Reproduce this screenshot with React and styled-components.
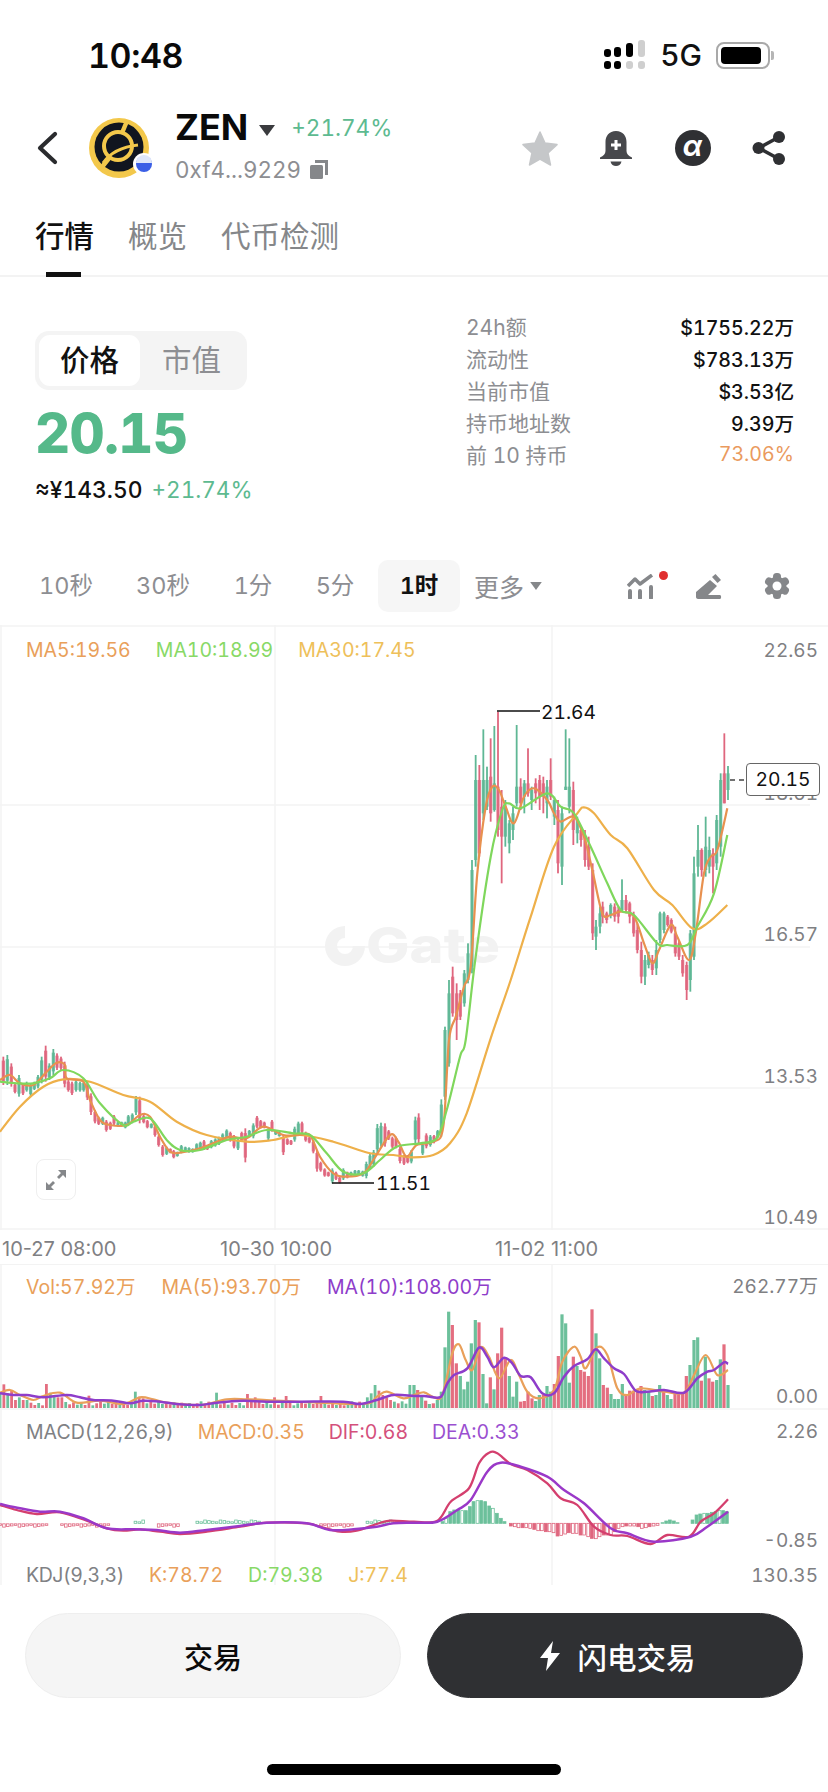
import React from "react";
import styled, { createGlobalStyle } from "styled-components";

const FONT = `"Inter", "Noto Sans CJK SC", "Noto Sans", sans-serif`;
const GREEN = "#5dba90";
const CANDLE_G = "#5fb795";
const CANDLE_R = "#df667e";

const Global = createGlobalStyle`
  html, body { margin: 0; padding: 0; background: #fff; }
  body { font-family: ${FONT}; color: #111; font-variant-numeric: tabular-nums; }
  * { box-sizing: border-box; }
`;

/* ---------- chart data, traced from the picture ---------- */
const L = (s) => s.trim().split(/\s+/).map((p) => p.split(",").map(Number));
const z3 = (s) => L(s).map(([x, y]) => [414 + x / 3, 640 + y / 3]);
const z4 = (s) => L(s).map(([x, y]) => [x / 3, 1000 + y / 3]);
const z5 = (s) => L(s).map(([x, y]) => [414 + x / 3, 1260 + y / 3]);
const z6 = (s) => L(s).map(([x, y]) => [x / 3, 1260 + y / 3]);

const smooth = (pts) => {
  let d = `M${pts[0][0].toFixed(1)} ${pts[0][1].toFixed(1)}`;
  for (let i = 0; i < pts.length - 1; i++) {
    const p0 = pts[i - 1] || pts[i];
    const p1 = pts[i];
    const p2 = pts[i + 1];
    const p3 = pts[i + 2] || p2;
    const c1x = p1[0] + (p2[0] - p0[0]) / 6;
    const c1y = p1[1] + (p2[1] - p0[1]) / 6;
    const c2x = p2[0] - (p3[0] - p1[0]) / 6;
    const c2y = p2[1] - (p3[1] - p1[1]) / 6;
    d += `C${c1x.toFixed(1)} ${c1y.toFixed(1)} ${c2x.toFixed(1)} ${c2y.toFixed(1)} ${p2[0].toFixed(1)} ${p2[1].toFixed(1)}`;
  }
  return d;
};

const MA5 = [
  ...z4("0,240 30,225 60,250 100,255 140,215 170,188 195,195 200,235 250,245 270,300 300,360 330,375 380,375 420,345 450,350 480,410 510,455 540,458 600,445 650,425 690,410 740,415 790,380 850,405 900,405 930,405 960,470 1000,520 1040,530 1090,520 1120,480 1170,405 1195,425 1220,470 1250,435 1300,425 1330,380"),
  ...z3("105,1200 125,1130 150,1040 170,980 190,700 215,500 235,440 255,450 275,500 300,550 330,470 360,445 400,480 420,520 440,545 480,530 510,590 535,690 565,820 590,825 620,815 660,830 690,910 715,970 735,930 770,855 790,890 825,960 845,880 870,700 890,650 910,630 940,505"),
];
const MA10 = [
  ...z4("0,245 50,250 100,250 150,235 190,210 250,235 300,310 370,375 400,365 450,355 500,420 540,450 600,450 680,420 740,410 800,390 880,400 930,405 980,460 1030,515 1090,520 1140,480 1190,440 1260,430 1310,415 1340,330 1380,170"),
  ...z3("155,1200 185,950 230,650 265,510 285,490 320,505 400,460 440,500 480,520 530,620 580,730 620,810 660,825 730,910 760,915 820,915 850,860 900,760 940,585"),
];
const MA30 = [
  ...z4("0,395 60,320 130,260 190,238 270,245 370,285 450,305 530,365 620,405 740,425 820,420 900,405 1000,425 1110,460 1180,465 1240,472 1300,465 1350,430 1400,340"),
  ...z3("230,1195 290,1020 350,830 420,620 490,520 510,502 540,520 590,585 640,625 720,750 775,795 835,865 880,850 940,795"),
];

const leftCandles = `10R170-255 22G165-255 34R190-260 45R250-280 57G225-290 69R250-285 80G245-275 92G250-288 103G245-270 114G225-265 125G170-250 137R137-245 148G190-240 160G147-225 171R160-210 183R170-210 194R185-262 205R240-275 216R245-285 228G240-275 240G245-275 251G245-275 262R245-300 273R280-345 285R330-370 296R350-375 308G350-375 319R360-395 331R365-390 342R345-375 354G365-380 365G365-380 376G365-385 385G345-375 397G340-370 408G288-345 419R290-370 431R345-370 442R360-385 454G370-385 465R375-410 476R405-440 488R435-470 500G440-465 511R445-460 521R450-475 532G455-470 544G435-460 556G440-455 567G442-458 578G445-458 590G430-450 601G425-450 612R420-450 622R435-450 634G420-445 646G415-440 657G410-435 668G400-425 680G388-415 691R395-425 702R405-445 714G415-450 725R395-425 736R385-487 748G390-410 760G370-415 771R348-385 782R360-385 793R365-385 805G385-420 816R360-395 827G390-405 838G395-410 850R405-465 862R415-435 873R420-435 884G380-425 895G365-405 906R365-400 917R395-425 928R410-430 940R420-460 951R450-515 962R485-515 974R505-530 985R515-530 997G505-550 1008R515-540 1019R530-550 1030G505-540 1042R515-535 1053G515-530 1065G510-525 1076G510-525 1088G512-530 1099G485-535 1110G460-510 1121G450-500 1132G372-460 1143G368-440 1155R370-440 1166R390-420 1177R410-445 1188R410-445 1200R440-490 1212R465-495 1223R465-490 1234G450-490 1246G350-430 1256R340-430 1268G430-465 1279R400-445 1291G405-440 1302R405-430 1313G390-415 1324G298-410`;

const rightCandles = `93G1160-1380:1170-1370 105G1020-1280:1060-1270 116R980-1130:1010-1120 128R1030-1200:1060-1140 139R1050-1140:1060-1130 151G990-1100:1000-1090 162G910-1030:940-1020 174G660-1000:690-980 185G345-680:420-660 196R375-650:420-640 208G268-540:420-520 219G380-510:420-500 230R295-545:410-520 241G258-515:430-510 252R215-590:440-570 263R450-730:500-590 274G480-620:500-590 286G540-640:550-610 297G500-600:520-570 308G255-500:440-490 320R415-510:440-490 331G420-520:430-470 342R325-470:430-460 353G440-510:450-480 365R415-490:430-460 377R405-510:420-470 388R410-520:430-470 399G420-535:440-490 410R355-480:420-470 421G470-555:480-530 432R480-700:510-670 444G500-735:520-680 455G268-450:440-450 466G295-520:440-500 478R425-615:450-570 490G530-610:540-580 501R560-620:570-600 513R570-680:590-660 524R590-690:620-680 536R670-900:690-880 546G840-930:860-890 558G800-880:820-860 566R785-850:800-830 578R815-850:820-840 590G790-835:795-825 602R790-845:800-830 613R800-850:810-830 624G718-815:780-810 636R765-820:780-810 647R785-850:790-830 659R815-890:830-880 670R850-940:870-930 682R905-1030:930-1010 693G945-1035:960-1010 704G935-985:945-975 715R945-1005:960-990 727G900-1005:930-985 738G815-910:820-900 750G815-880:820-870 761R825-860:830-855 772R835-880:840-875 784R860-950:880-940 795R900-960:910-950 806R945-1010:960-1000 818R965-1080:975-1050 829G870-1055:880-1020 840G650-960:700-950 852G555-710:630-680 863R625-710:630-690 875G530-710:620-690 886G590-700:630-680 897R625-760:640-680 908G525-690:540-670 920G400-650:420-620 931R280-490:400-490 942G378-480:400-450`;

const parseCandles = (s, conv) =>
  s.trim().split(/\s+/).map((t) => {
    const m = t.match(/^(\d+)([RG])(\d+)-(\d+)(?::(\d+)-(\d+))?$/);
    const x = +m[1], a = +m[3], b = +m[4];
    const inset = (b - a) * 0.14;
    const bt = m[5] ? +m[5] : a + inset;
    const bb = m[6] ? +m[6] : b - inset;
    return { x: conv(x), c: m[2], t: 0, a, b, bt, bb };
  });

const candles = [
  ...parseCandles(leftCandles, (x) => x / 3).map((c) => ({ ...c, y: (v) => 1000 + v / 3 })),
  ...parseCandles(rightCandles, (x) => 414 + x / 3).map((c) => ({ ...c, y: (v) => 640 + v / 3 })),
];

const volRight = L(`0,375,1 11,390,0 23,405,1 35,422,0 46,432,1 58,430,0 70,420,1 82,395,1 93,262,1 104,155,1 115,195,0 127,310,0 139,348,1 150,388,1 161,365,1 172,250,1 184,180,1 195,187,0 207,342,1 218,430,1 229,352,0 240,388,1 251,280,0 263,203,0 274,295,0 286,348,1 297,410,1 308,365,1 320,425,0 331,423,0 342,395,0 354,415,0 365,423,1 376,405,1 388,403,0 399,378,1 410,395,1 421,372,0 433,288,0 444,163,1 455,190,1 466,368,1 478,290,0 489,318,1 500,330,0 511,335,0 523,348,0 534,148,0 546,220,1 557,295,1 568,375,0 580,383,0 591,402,1 602,417,1 613,417,1 625,372,1 636,405,0 647,392,0 658,392,0 670,390,0 681,378,0 692,390,1 704,395,1 715,408,0 726,405,1 737,375,1 749,390,0 760,405,1 771,417,1 783,398,0 794,400,0 806,400,0 817,348,0 828,315,1 840,240,1 851,232,1 862,362,0 874,290,1 885,355,0 896,365,0 908,360,1 919,298,1 930,253,0 942,375,1`);

const volLeftPeaks = { 0: [400, 1], 1: [373, 0], 2: [400, 1], 3: [390, 0], 4: [420, 0], 5: [412, 1], 6: [420, 0], 7: [420, 1], 12: [372, 0], 13: [398, 1], 14: [410, 1], 15: [412, 0], 16: [412, 0], 23: [407, 0], 35: [395, 1], 36: [410, 0], 37: [415, 0], 56: [398, 1], 64: [402, 0], 66: [412, 0], 71: [412, 0], 74: [408, 0], 83: [408, 0], 95: [412, 1], 96: [400, 1], 97: [375, 1], 98: [392, 0], 99: [405, 0], 100: [412, 0], 101: [420, 0], 102: [425, 1], 106: [375, 1] };
const volLeft = Array.from({ length: 107 }, (_, i) => {
  const o = volLeftPeaks[i];
  if (o) return [i * 11.6, o[0], o[1]];
  return [i * 11.6, 424 + ((i * 7) % 13), (i * 5) % 7 < 3 ? 1 : 0];
});

const volMa5 = [...z6("0,398 30,390 60,405 100,420 130,408 180,398 230,428 300,422 370,432 420,412 460,418 500,428 600,435 680,418 740,418 800,420 1080,432 1130,410 1160,395 1210,415"), ...z5("0,405 30,397 60,412 85,405 115,280 135,253 155,300 175,330 200,262 225,290 255,355 290,300 315,345 340,395 375,415 420,390 445,305 480,260 500,290 515,325 550,262 580,285 610,385 640,405 680,385 750,395 810,398 840,345 875,285 910,345 942,330")];
const volMa10 = [...z6("0,400 40,405 80,405 130,412 200,405 240,412 280,420 340,422 390,430 430,422 480,425 530,432 600,435 650,428 730,422 800,425 900,425 1030,425 1080,432 1130,420 1180,405"), ...z5("0,408 30,408 70,413 85,405 100,370 120,345 160,325 195,263 220,290 240,322 270,293 295,310 320,348 350,352 385,400 420,400 450,350 480,318 520,298 545,268 570,295 600,325 630,342 665,392 700,395 750,390 810,398 850,355 880,335 900,330 930,307 942,312")];

const dif = [...z6("0,735 50,750 110,762 180,757 260,782 320,805 370,812 420,808 480,815 540,822 620,815 720,800 800,788 920,790 960,800 1020,815 1070,812 1130,792 1170,782"), ...z5("0,785 70,782 110,725 165,685 195,610 225,578 250,580 290,612 340,630 400,670 440,715 490,735 540,800 590,825 640,828 710,852 760,825 825,830 860,785 900,760 942,718")];
const dea = [...z6("0,732 60,745 120,755 180,755 250,775 320,805 400,808 470,810 540,818 620,810 720,798 800,788 920,790 990,810 1060,808 1130,800 1180,790"), ...z5("0,788 70,785 130,750 170,720 220,635 260,608 320,620 400,650 450,690 510,730 590,805 640,820 720,845 830,830 880,800 942,755")];

const histG = L("85,785 96,775 108,755 120,750 132,750 144,752 155,752 167,740 178,725 190,722 201,722 213,725 225,738 236,745 248,760 260,775 271,785 745,788 756,783 767,780 779,783 790,788 835,780 847,765 858,762 870,760 881,760 893,757 904,755 916,752 927,752 938,755");
const histR = L("290,798 302,800 313,803 325,803 336,803 348,805 360,808 372,812 383,812 395,815 406,815 418,818 430,828 441,826 453,822 464,818 476,820 487,820 499,825 510,825 522,830 533,835 545,836 556,830 568,825 579,825 590,825 602,815 613,805 625,800 636,798 648,798 660,798 672,800 683,805 695,803 706,800 718,798 730,796");
const MACD_BASE = 1260 + 790 / 3;
const histLeft = Array.from({ length: 107 }, (_, i) => {
  const x = i * 11.6;
  const red = (x < 150) || (x > 180 && x < 330) || (x > 470 && x < 540) || (x > 960 && x < 1060);
  const green = (x > 590 && x < 780) || (x > 1100 && x < 1190) || (x > 405 && x < 430);
  if (!red && !green) return null;
  return { x: x / 3, red, h: 1.5 + ((i * 3) % 4) * 0.6 };
}).filter(Boolean);

/* ---------- page ---------- */
const Page = styled.div`
  width: 828px;
  height: 1792px;
  overflow: hidden;
  background: #fff;
  font-family: ${FONT};
`;
const StatusBar = styled.div`
  height: 110px;
  display: flex;
  align-items: center;
  justify-content: space-between;
  padding: 0 58px 0 88px;
`;
const Clock = styled.div`
  font-size: 34px;
  font-weight: 600;
  letter-spacing: -0.4px;
  color: #0a0a0a;
`;
const StatusRight = styled.div`
  display: flex;
  align-items: center;
  gap: 14px;
`;
const Network = styled.div`
  font-size: 30px;
  font-weight: 500;
  color: #111;
`;
const Battery = styled.div`
  position: relative;
  width: 54px;
  height: 27px;
  border: 2px solid #a9a9a9;
  border-radius: 8px;
  padding: 3px;
  &::after {
    content: "";
    position: absolute;
    right: -6px;
    top: 7px;
    width: 3px;
    height: 9px;
    background: #b5b5b5;
    border-radius: 0 2px 2px 0;
  }
`;
const BatteryFill = styled.div`
  width: 40px;
  height: 100%;
  background: #000;
  border-radius: 4px;
`;
const Header = styled.div`
  height: 75px;
  display: flex;
  align-items: center;
  padding: 0 41px 0 36px;
`;
const Logo = styled.div`
  position: relative;
  width: 60px;
  height: 60px;
  margin-left: 31px;
  flex: none;
`;
const Badge = styled.svg`
  position: absolute;
  right: -6px;
  bottom: 3px;
`;
const TitleCol = styled.div`
  margin-left: 26px;
  display: flex;
  flex-direction: column;
  gap: 9px;
  margin-top: -6px;
`;
const TitleRow = styled.div`
  display: flex;
  align-items: center;
  height: 40px;
`;
const Symbol = styled.div`
  font-size: 36px;
  font-weight: 700;
  color: #0a0a0a;
`;
const Change = styled.div`
  font-size: 22.500px;
  color: ${GREEN};
  margin-left: ${(p) => p.$gap || 0}px;
`;
const AddressRow = styled.div`
  display: flex;
  align-items: center;
  gap: 9px;
  font-size: 22.400px;
  color: #8d8e92;
  height: 26px;
`;
const HeaderIcons = styled.div`
  margin-left: auto;
  display: flex;
  align-items: center;
  gap: 40.5px;
`;
const IconSlot = styled.div`
  width: 36px;
  height: 36px;
  display: flex;
  align-items: center;
  justify-content: center;
`;
const AlphaBadge = styled.div`
  width: 36px;
  height: 36px;
  border-radius: 50%;
  background: #2f3033;
  color: #fff;
  font-size: 28px;
  font-style: italic;
  font-weight: 700;
  line-height: 33px;
  text-align: center;
`;
const Tabs = styled.div`
  height: 92px;
  display: flex;
  padding: 33px 0 0 35px;
  gap: 34px;
  border-bottom: 2px solid #f3f3f3;
`;
const Tab = styled.div`
  position: relative;
  height: 57px;
  font-size: 29.500px;
  line-height: 36px;
  color: ${(p) => (p.$active ? "#111" : "#85878a")};
  font-weight: ${(p) => (p.$active ? 500 : 400)};
  ${(p) =>
    p.$active &&
    `&::after {
      content: "";
      position: absolute;
      left: 11px;
      bottom: -2px;
      width: 35px;
      height: 5px;
      background: #111;
    }`}
`;
const Market = styled.div`
  height: 283px;
  display: flex;
  justify-content: space-between;
  padding: 34px 34px 0 35px;
`;
const PriceCol = styled.div`
  padding-top: 20px;
`;
const Toggle = styled.div`
  width: 212px;
  height: 59px;
  padding: 4px;
  background: #f4f4f4;
  border-radius: 14px;
  display: flex;
`;
const ToggleItem = styled.div`
  width: ${(p) => (p.$active ? 101 : 103)}px;
  border-radius: 11px;
  background: ${(p) => (p.$active ? "#fff" : "transparent")};
  color: ${(p) => (p.$active ? "#111" : "#8d8e92")};
  font-size: 29.500px;
  font-weight: ${(p) => (p.$active ? 500 : 400)};
  line-height: 51px;
  text-align: center;
`;
const BigPrice = styled.div`
  margin-top: 13px;
  font-size: 54.400px;
  line-height: 60px;
  font-weight: 800;
  color: #55b98a;
  letter-spacing: -0.5px;
`;
const SubRow = styled.div`
  margin-top: 11px;
  display: flex;
  align-items: center;
  gap: 9px;
  height: 30px;
`;
const Fiat = styled.div`
  font-size: 22.800px;
  font-weight: 500;
  color: #111;
`;
const Stats = styled.div`
  width: 328px;
  margin-top: -1px;
`;
const StatRow = styled.div`
  height: 32px;
  display: flex;
  align-items: center;
  justify-content: space-between;
`;
const StatLabel = styled.span`
  color: #8d8e92;
  font-size: 21px;
`;
const StatValue = styled.span`
  font-size: 19.600px;
  color: ${(p) => p.$color || "#111"};
  font-weight: ${(p) => (p.$color ? 400 : 500)};
`;
const Periods = styled.div`
  height: 52px;
  display: flex;
  align-items: center;
  padding: 0 38px 0 20px;
`;
const Period = styled.div`
  width: ${(p) => p.$w}px;
  height: 52px;
  line-height: 52px;
  text-align: center;
  font-size: 23.500px;
  color: ${(p) => (p.$active ? "#111" : "#8d8e92")};
  font-weight: ${(p) => (p.$active ? 600 : 400)};
  background: ${(p) => (p.$active ? "#f6f6f6" : "transparent")};
  border-radius: 10px;
`;
const More = styled.div`
  display: flex;
  align-items: center;
  gap: 6px;
  margin-left: 14px;
  font-size: 25px;
  color: #8d8e92;
`;
const Tools = styled.div`
  margin-left: auto;
  display: flex;
  align-items: center;
  gap: 42px;
`;
const ToolWrap = styled.div`
  position: relative;
  display: flex;
`;
const RedDot = styled.span`
  position: absolute;
  right: -14px;
  top: -3px;
  width: 9px;
  height: 9px;
  border-radius: 50%;
  background: #e02f2f;
`;
const Chart = styled.div`
  margin-top: 13px;
  width: 828px;
`;
const Panel = styled.div`
  position: relative;
  height: ${(p) => p.$h}px;
  overflow: hidden;
`;
const PanelSvg = styled.svg`
  display: block;
  width: 828px;
  height: ${(p) => p.$h}px;
`;
const Legend = styled.div`
  position: absolute;
  left: ${(p) => p.$left || 26}px;
  top: ${(p) => p.$top}px;
  display: flex;
  gap: ${(p) => p.$gap}px;
  font-size: 19.500px;
  line-height: 26px;
  white-space: nowrap;
`;
const LegendItem = styled.span`
  color: ${(p) => p.$c};
  letter-spacing: ${(p) => p.$ls || 0}px;
`;
const AxisValue = styled.div`
  position: absolute;
  right: 10px;
  top: ${(p) => p.$top}px;
  font-size: 19px;
  line-height: 26px;
  color: #7f8083;
`;
const Extreme = styled.div`
  position: absolute;
  left: ${(p) => p.$left}px;
  top: ${(p) => p.$top}px;
  font-size: 19.200px;
  line-height: 24px;
  color: #111;
`;
const LastPrice = styled.div`
  position: absolute;
  left: 746px;
  top: 138px;
  width: 74px;
  height: 33px;
  background: #fff;
  border: 1px solid #666;
  border-radius: 4px;
  font-size: 19.300px;
  line-height: 31px;
  text-align: center;
  color: #111;
`;
const Expand = styled.div`
  position: absolute;
  left: 36px;
  top: 534px;
  width: 40px;
  height: 41px;
  border: 1.5px solid #efefef;
  border-radius: 8px;
  background: #fff;
  display: flex;
  align-items: center;
  justify-content: center;
`;
const TimeAxis = styled.div`
  height: 35px;
  display: grid;
  grid-template-columns: 218px 275px 1fr;
  align-items: center;
  padding: 3px 0 0 2px;
  font-size: 20px;
  font-variant-numeric: normal;
  color: #7f8083;
  border-bottom: 1px solid #f3f3f3;
  white-space: nowrap;
`;
const Actions = styled.div`
  margin-top: 28px;
  display: flex;
  gap: 26px;
  padding: 0 25px;
`;
const Action = styled.div`
  flex: 1 1 0;
  min-width: 0;
  height: 85px;
  border-radius: 43px;
  display: flex;
  align-items: center;
  justify-content: center;
  gap: 17px;
  font-size: ${(p) => (p.$dark ? 29.5 : 29)}px;
  font-weight: 500;
  background: ${(p) => (p.$dark ? "#2f3033" : "#f5f5f5")};
  color: ${(p) => (p.$dark ? "#fff" : "#0a0a0a")};
  border: 1px solid ${(p) => (p.$dark ? "#2f3033" : "#eeeeee")};
`;
const ActionLabel = styled.span`
  margin-right: ${(p) => p.$offset || 0}px;
`;
const HomeBar = styled.div`
  margin: 66px auto 0;
  width: 294px;
  height: 11px;
  border-radius: 6px;
  background: #000;
`;

/* ---------- icons ---------- */
const Signal = () => (
  <svg width="42" height="30" viewBox="0 0 42 30">
    {[
      [0, 9, 8, "#000"], [10, 7, 10, "#000"], [22, 3, 14, "#000"], [34, 0, 17, "#cfcfcf"],
    ].map(([x, y, h, c]) => <rect key={x} x={x} y={y} width="7" height={h} rx="3" fill={c} />)}
    {[[0, "#000"], [10, "#000"], [22, "#cfcfcf"], [34, "#cfcfcf"]].map(([x, c]) => (
      <rect key={x} x={x} y="21" width="7" height="8" rx="3" fill={c} />
    ))}
  </svg>
);
const Back = () => (
  <svg width="22" height="34" viewBox="0 0 22 34" fill="none">
    <path d="M19 3 4 17l15 14" stroke="#2a2b2e" strokeWidth="4.2" strokeLinecap="round" strokeLinejoin="round" />
  </svg>
);
const ZenLogo = () => (
  <svg width="60" height="60" viewBox="0 0 60 60">
    <circle cx="30" cy="30" r="30" fill="#f3c84b" />
    <circle cx="30" cy="29" r="24.500" fill="#10151f" />
    <circle cx="29" cy="28" r="14" fill="#10151f" stroke="#f3c84b" strokeWidth="4" />
    <path d="M14 45C21 35 31 29 49 27" fill="none" stroke="#f3c84b" strokeWidth="3" />
    <path d="M38 3 33 15M13 49l8-10" stroke="#f3c84b" strokeWidth="4.500" />
  </svg>
);
const Star = () => (
  <svg width="36" height="36" viewBox="0 0 36 36">
    <path d="M18 2l5 11 12 1.600-9 8.400 2.500 12L18 29l-10.500 6L10 23 1 14.600 13 13z" fill="#c5c7c9" stroke="#c5c7c9" strokeWidth="1.500" strokeLinejoin="round" />
  </svg>
);
const Bell = () => (
  <svg width="34" height="36" viewBox="0 0 34 36">
    <path d="M17 1c7 0 10.500 5 10.500 11v9c0 3 2 5 5.500 6.500V29H1v-1.500C4.500 26 6.500 24 6.500 21v-9C6.500 6 10 1 17 1z" fill="#47484c" />
    <path d="M11.500 31.500h11c-.5 3-3 4.500-5.500 4.500s-5-1.500-5.500-4.500z" fill="#47484c" />
    <path d="M17 10v10M12 15h10" stroke="#fff" strokeWidth="3" />
  </svg>
);
const Share = () => (
  <svg width="36" height="36" viewBox="0 0 36 36" fill="#2f3033">
    <path d="M28 7 8 18l20 11" fill="none" stroke="#2f3033" strokeWidth="3.500" />
    <circle cx="28" cy="7" r="6" />
    <circle cx="7.500" cy="18" r="6" />
    <circle cx="28" cy="29" r="6" />
  </svg>
);
const Copy = () => (
  <svg width="18" height="19" viewBox="0 0 18 19" fill="#85878a">
    <rect x="0" y="5" width="13" height="14" rx="1.500" />
    <path d="M5 0h13v15h-3V3H5z" />
  </svg>
);
const Caret = ({ w, h, c }) => (
  <svg width={w} height={h} viewBox="0 0 16 11">
    <path d="M0 0h16L8 11z" fill={c} />
  </svg>
);
const Indicator = () => (
  <svg width="27" height="25" viewBox="0 0 27 25" fill="none" stroke="#85878a">
    <path d="M1 12l7-7 5 5L25 1" strokeWidth="3.500" strokeLinejoin="round" />
    <path d="M3 17v7M13 17v7M24 13v11" strokeWidth="4" strokeLinecap="round" />
  </svg>
);
const Pencil = () => (
  <svg width="26" height="25" viewBox="0 0 26 25" fill="#85878a">
    <path d="M0 18 14 6l7 6-9 9h12c1.500 0 1.500 4 0 4H2c-1 0-2-1-2-2z" />
    <path d="M16 3l3.500-3 5.500 6-3.500 3z" />
  </svg>
);
const Gear = () => (
  <svg width="26" height="26" viewBox="0 0 26 26" fill="#85878a">
    {[0, 60, 120].map((a) => (
      <rect key={a} x="9" y="0" width="8" height="26" rx="3.500" transform={`rotate(${a} 13 13)`} />
    ))}
    <circle cx="13" cy="13" r="9.500" />
    <circle cx="13" cy="13" r="4.500" fill="#fff" />
  </svg>
);
const ExpandIcon = () => (
  <svg width="22" height="22" viewBox="0 0 22 22" fill="#85878a">
    <path d="M13 1h8v8l-3-3-4 4-2-2 4-4z" />
    <path d="M9 21H1v-8l3 3 4-4 2 2-4 4z" />
  </svg>
);
const Bolt = () => (
  <svg width="20" height="30" viewBox="0 0 20 30">
    <path d="M13 0 0 17h8L6 30 20 12h-9z" fill="#fff" />
  </svg>
);

const MainChart = () => (
  <PanelSvg $h={605} viewBox="0 625 828 605">
    <g stroke="#f3f3f3" strokeWidth="1.500">
      <path d="M0 626H828M0 805H810M0 947H810M0 1088H810M0 1229H828" fill="none" />
      <path d="M1 625V1230M275 625V1230M552 625V1230" fill="none" />
    </g>
    <g fill="#f2f2f2">
      <path fillRule="evenodd" d="M345 926a20 20 0 1 0 20 20h-12a8 8 0 1 1-8-8z" />
      <text x="366" y="963" fontFamily={FONT} fontWeight="800" fontSize="49" textLength="134" lengthAdjust="spacingAndGlyphs">Gate</text>
    </g>
    {candles.map((c, i) => {
      const col = c.c === "G" ? CANDLE_G : CANDLE_R;
      return (
        <g key={i} fill={col}>
          <rect x={c.x - 0.9} y={c.y(c.a)} width="1.800" height={(c.b - c.a) / 3} />
          <rect x={c.x - 1.6} y={c.y(c.bt)} width="3.200" height={(c.bb - c.bt) / 3} opacity="0.85" />
        </g>
      );
    })}
    <g fill="none" strokeWidth="2.200">
      <path d={smooth(MA30)} stroke="#eeb04a" />
      <path d={smooth(MA5)} stroke="#e8914f" />
      <path d={smooth(MA10)} stroke="#7fd75c" />
    </g>
    <g fill="none" stroke="#111" strokeWidth="1.500">
      <path d="M497 711H540M332 1183H374" />
      <path d="M730 780H746" strokeDasharray="5 4" stroke="#444" />
    </g>
  </PanelSvg>
);

const VolChart = () => (
  <PanelSvg $h={143} viewBox="0 1265 828 143">
    <path d="M275 1265V1408M552 1265V1408M1 1265V1408" stroke="#f3f3f3" strokeWidth="1.500" />
    {volLeft.map(([x, y, g], i) => (
      <rect key={i} x={x / 3 - 1.4} y={1260 + y / 3} width="2.800" height={1408 - 1260 - y / 3} fill={g ? "#6cc09b" : "#e46e80"} />
    ))}
    {volRight.map(([x, y, g], i) => (
      <rect key={i} x={414 + x / 3 - 1.6} y={1260 + y / 3} width="3.200" height={1408 - 1260 - y / 3} fill={g ? "#6cc09b" : "#e46e80"} />
    ))}
    <path d={smooth(volMa5)} fill="none" stroke="#e9a05a" strokeWidth="2.200" />
    <path d={smooth(volMa10)} fill="none" stroke="#8e3dca" strokeWidth="2.500" />
  </PanelSvg>
);

const MacdChart = () => (
  <PanelSvg $h={177} viewBox="0 1408 828 177">
    <path d="M0 1409H828" stroke="#f3f3f3" strokeWidth="1.500" />
    <path d="M275 1408V1585M552 1408V1585M1 1408V1585" stroke="#f3f3f3" strokeWidth="1.500" />
    {histLeft.map((b, i) => (
      <rect key={i} x={b.x - 1.2} y={b.red ? MACD_BASE + 0.5 : MACD_BASE - b.h} width="2.600" height={b.h} fill="none" stroke={b.red ? "#df667e" : "#6cc09b"} strokeWidth="0.800" />
    ))}
    {histG.map(([x, y], i) => {
      const ty = 1260 + y / 3;
      return <rect key={i} x={414 + x / 3 - 1.2} y={ty} width="2.800" height={MACD_BASE - ty} fill={i % 4 === 1 ? "#fff" : "#6cc09b"} stroke="#6cc09b" strokeWidth="0.800" />;
    })}
    {histR.map(([x, y], i) => {
      const ty = 1260 + y / 3;
      return <rect key={i} x={414 + x / 3 - 1.2} y={MACD_BASE} width="2.800" height={ty - MACD_BASE} fill={i % 3 === 0 ? "#df667e" : "#fff"} stroke="#df667e" strokeWidth="0.800" />;
    })}
    <path d={smooth(dif)} fill="none" stroke="#d43f6e" strokeWidth="2.300" />
    <path d={smooth(dea)} fill="none" stroke="#9a38c8" strokeWidth="2.500" />
  </PanelSvg>
);

const stats = [
  ["24h额", "$1755.22万"],
  ["流动性", "$783.13万"],
  ["当前市值", "$3.53亿"],
  ["持币地址数", "9.39万"],
  ["前 10 持币", "73.06%", "#ea9a5e"],
];
const periods = [["10秒", 92], ["30秒", 102], ["1分", 78], ["5分", 86], ["1时", 82, true]];

export default function App() {
  return (
    <Page>
      <Global />
      <StatusBar>
        <Clock>10:48</Clock>
        <StatusRight>
          <Signal />
          <Network>5G</Network>
          <Battery><BatteryFill /></Battery>
        </StatusRight>
      </StatusBar>

      <Header>
        <Back />
        <Logo>
          <ZenLogo />
          <Badge width="22" height="22" viewBox="0 0 22 22">
            <circle cx="11" cy="11" r="11" fill="#fff" />
            <circle cx="11" cy="11" r="8" fill="#3b5fe6" />
            <path d="M3 10a8 8 0 0 1 16 0z" fill="#dfe7fa" />
          </Badge>
        </Logo>
        <TitleCol>
          <TitleRow>
            <Symbol>ZEN</Symbol>
            <Change as="span" $gap={11}><Caret w={16} h={11} c="#3a3b3e" /></Change>
            <Change $gap={16}>+21.74%</Change>
          </TitleRow>
          <AddressRow>0xf4...9229 <Copy /></AddressRow>
        </TitleCol>
        <HeaderIcons>
          <IconSlot><Star /></IconSlot>
          <IconSlot><Bell /></IconSlot>
          <AlphaBadge>α</AlphaBadge>
          <IconSlot><Share /></IconSlot>
        </HeaderIcons>
      </Header>

      <Tabs>
        <Tab $active>行情</Tab>
        <Tab>概览</Tab>
        <Tab>代币检测</Tab>
      </Tabs>

      <Market>
        <PriceCol>
          <Toggle>
            <ToggleItem $active>价格</ToggleItem>
            <ToggleItem>市值</ToggleItem>
          </Toggle>
          <BigPrice>20.15</BigPrice>
          <SubRow>
            <Fiat>≈¥143.50</Fiat>
            <Change>+21.74%</Change>
          </SubRow>
        </PriceCol>
        <Stats>
          {stats.map(([k, v, c]) => (
            <StatRow key={k}>
              <StatLabel>{k}</StatLabel>
              <StatValue $color={c}>{v}</StatValue>
            </StatRow>
          ))}
        </Stats>
      </Market>

      <Periods>
        {periods.map(([t, w, a]) => <Period key={t} $w={w} $active={a}>{t}</Period>)}
        <More>更多 <Caret w={12} h={8} c="#85878a" /></More>
        <Tools>
          <ToolWrap><Indicator /><RedDot /></ToolWrap>
          <Pencil />
          <Gear />
        </Tools>
      </Periods>

      <Chart>
        <Panel $h={605}>
          <MainChart />
          <Legend $top={12} $gap={25}>
            <LegendItem $c="#e9a05a">MA5:19.56</LegendItem>
            <LegendItem $c="#88d966">MA10:18.99</LegendItem>
            <LegendItem $c="#eec05a">MA30:17.45</LegendItem>
          </Legend>
          <AxisValue $top={13}>22.65</AxisValue>
          <AxisValue $top={156}>18.61</AxisValue>
          <AxisValue $top={297}>16.57</AxisValue>
          <AxisValue $top={439}>13.53</AxisValue>
          <AxisValue $top={580}>10.49</AxisValue>
          <Extreme $left={541} $top={75}>21.64</Extreme>
          <Extreme $left={376} $top={546}>11.51</Extreme>
          <LastPrice>20.15</LastPrice>
          <Expand><ExpandIcon /></Expand>
        </Panel>
        <TimeAxis>
          <span>10-27 08:00</span>
          <span>10-30 10:00</span>
          <span>11-02 11:00</span>
        </TimeAxis>
        <Panel $h={143}>
          <VolChart />
          <Legend $top={9} $gap={26}>
            <LegendItem $c="#e9a05a">Vol:57.92万</LegendItem>
            <LegendItem $c="#e9a05a">MA(5):93.70万</LegendItem>
            <LegendItem $c="#8e3dca">MA(10):108.00万</LegendItem>
          </Legend>
          <AxisValue $top={9}>262.77万</AxisValue>
          <AxisValue $top={119}>0.00</AxisValue>
        </Panel>
        <Panel $h={177}>
          <MacdChart />
          <Legend $top={11} $gap={24}>
            <LegendItem $c="#808184">MACD(12,26,9)</LegendItem>
            <LegendItem $c="#e9a05a">MACD:0.35</LegendItem>
            <LegendItem $c="#d4507c">DIF:0.68</LegendItem>
            <LegendItem $c="#9a4fd0">DEA:0.33</LegendItem>
          </Legend>
          <AxisValue $top={11}>2.26</AxisValue>
          <AxisValue $top={120}>-0.85</AxisValue>
          <Legend $top={154} $gap={25}>
            <LegendItem $c="#808184" $ls={-0.4}>KDJ(9,3,3)</LegendItem>
            <LegendItem $c="#e9a05a">K:78.72</LegendItem>
            <LegendItem $c="#88d966">D:79.38</LegendItem>
            <LegendItem $c="#eec05a">J:77.4</LegendItem>
          </Legend>
          <AxisValue $top={155}>130.35</AxisValue>
        </Panel>
      </Chart>

      <Actions>
        <Action>交易</Action>
        <Action $dark><Bolt /><ActionLabel $offset={-6}>闪电交易</ActionLabel></Action>
      </Actions>
      <HomeBar />
    </Page>
  );
}
